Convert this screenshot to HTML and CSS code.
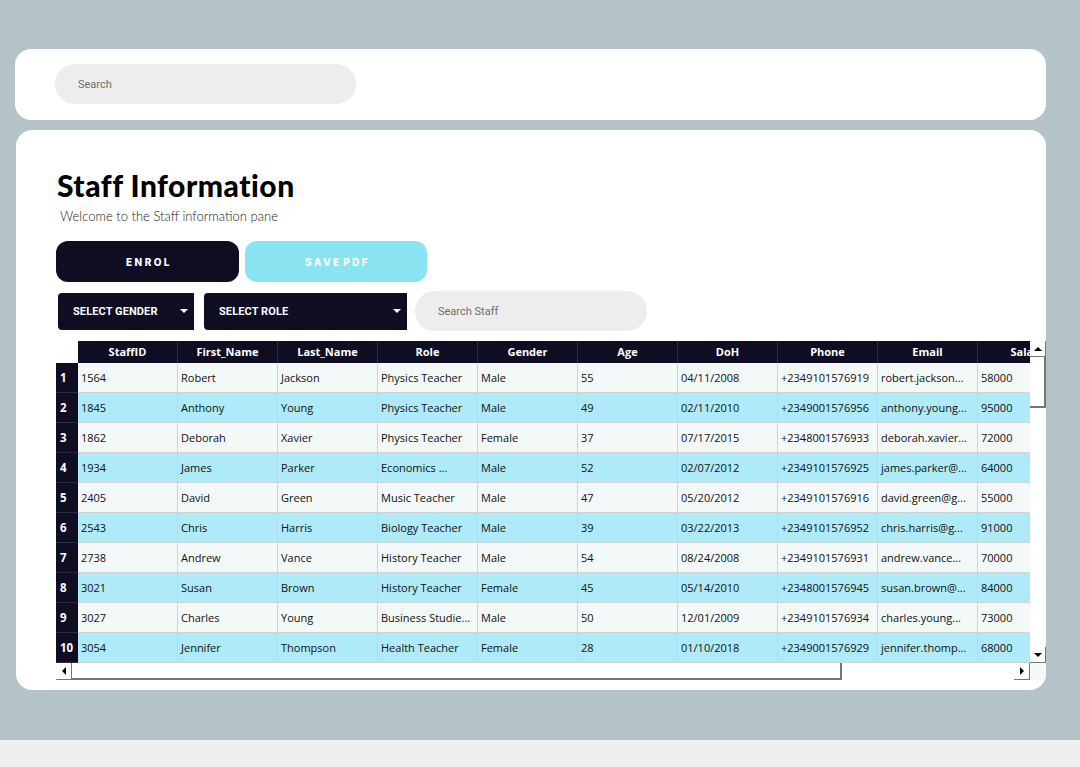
FILE: index.html
```html
<!DOCTYPE html>
<html>
<head>
<meta charset="utf-8">
<link rel="stylesheet" href="styles.css">
</head>
<body>
<div class="page">
  <header class="topbar">
    <div class="pill search-top">Search</div>
  </header>
  <main class="panel">
    <h1 class="title">Staff Information</h1>
    <p class="subtitle">Welcome to the Staff information pane</p>
    <div class="actions">
      <button class="btn btn-dark">ENROL</button>
      <button class="btn btn-light">SAVE PDF</button>
    </div>
    <div class="filters">
      <div class="select sel-gender"><span>SELECT GENDER</span><i class="caret"></i></div>
      <div class="select sel-role"><span>SELECT ROLE</span><i class="caret"></i></div>
      <div class="pill search-staff">Search Staff</div>
    </div>
    <div class="grid-wrap">
      <div class="viewport">
        <table class="data">
          <colgroup><col class="c-rh"><col><col><col><col><col><col><col><col><col><col></colgroup>
          <thead>
            <tr><th class="corner-cell"></th><th>StaffID</th><th>First_Name</th><th>Last_Name</th><th>Role</th><th>Gender</th><th>Age</th><th>DoH</th><th>Phone</th><th>Email</th><th>Salary</th></tr>
          </thead>
          <tbody>
            <tr class="odd"><th>1</th><td>1564</td><td>Robert</td><td>Jackson</td><td>Physics Teacher</td><td>Male</td><td>55</td><td>04/11/2008</td><td>+2349101576919</td><td>robert.jackson...</td><td>58000</td></tr>
            <tr class="even"><th>2</th><td>1845</td><td>Anthony</td><td>Young</td><td>Physics Teacher</td><td>Male</td><td>49</td><td>02/11/2010</td><td>+2349001576956</td><td>anthony.young...</td><td>95000</td></tr>
            <tr class="odd"><th>3</th><td>1862</td><td>Deborah</td><td>Xavier</td><td>Physics Teacher</td><td>Female</td><td>37</td><td>07/17/2015</td><td>+2348001576933</td><td>deborah.xavier...</td><td>72000</td></tr>
            <tr class="even"><th>4</th><td>1934</td><td>James</td><td>Parker</td><td>Economics ...</td><td>Male</td><td>52</td><td>02/07/2012</td><td>+2349101576925</td><td>james.parker@...</td><td>64000</td></tr>
            <tr class="odd"><th>5</th><td>2405</td><td>David</td><td>Green</td><td>Music Teacher</td><td>Male</td><td>47</td><td>05/20/2012</td><td>+2349101576916</td><td>david.green@g...</td><td>55000</td></tr>
            <tr class="even"><th>6</th><td>2543</td><td>Chris</td><td>Harris</td><td>Biology Teacher</td><td>Male</td><td>39</td><td>03/22/2013</td><td>+2349101576952</td><td>chris.harris@g...</td><td>91000</td></tr>
            <tr class="odd"><th>7</th><td>2738</td><td>Andrew</td><td>Vance</td><td>History Teacher</td><td>Male</td><td>54</td><td>08/24/2008</td><td>+2349101576931</td><td>andrew.vance...</td><td>70000</td></tr>
            <tr class="even"><th>8</th><td>3021</td><td>Susan</td><td>Brown</td><td>History Teacher</td><td>Female</td><td>45</td><td>05/14/2010</td><td>+2348001576945</td><td>susan.brown@...</td><td>84000</td></tr>
            <tr class="odd"><th>9</th><td>3027</td><td>Charles</td><td>Young</td><td>Business Studie...</td><td>Male</td><td>50</td><td>12/01/2009</td><td>+2349101576934</td><td>charles.young...</td><td>73000</td></tr>
            <tr class="even"><th>10</th><td>3054</td><td>Jennifer</td><td>Thompson</td><td>Health Teacher</td><td>Female</td><td>28</td><td>01/10/2018</td><td>+2349001576929</td><td>jennifer.thomp...</td><td>68000</td></tr>
          </tbody>
        </table>
      </div>
      <div class="vscroll">
        <div class="sbtn"><i class="tri tri-up"></i></div>
        <div class="vthumb"></div>
        <div class="vtrack"></div>
        <div class="sbtn"><i class="tri tri-down"></i></div>
      </div>
      <div class="hscroll">
        <div class="sbtn"><i class="tri tri-left"></i></div>
        <div class="hthumb"></div>
        <div class="htrack"></div>
        <div class="sbtn"><i class="tri tri-right"></i></div>
      </div>
      <div class="scorner"></div>
    </div>
  </main>
</div>
<footer class="bottom"></footer>
</body>
</html>
```

FILE: styles.css
```css
* { box-sizing: border-box; }
html, body { margin: 0; padding: 0; }
body { background: #efefef; font-family: "Open Sans", "Noto Sans", sans-serif; }

.page {
  background: #b3c3c7;
  height: 740px;
  padding: 49px 0 0 15px;
}

.topbar {
  width: 1031px;
  height: 71px;
  background: #fff;
  border-radius: 16px;
  padding: 15px 40px;
}

.pill {
  background: #ededed;
  border-radius: 20px;
  height: 40px;
  display: flex;
  align-items: center;
  padding-left: 23px;
  font-family: Roboto, "Noto Sans", sans-serif;
  font-size: 11px;
  color: #6e6e6e;
}
.search-top { width: 301px; }

.panel {
  margin-top: 10px;
  margin-left: 1px;
  width: 1030px;
  height: 560px;
  background: #fff;
  border-radius: 16px;
  padding: 38px 0 0 40px;
  overflow: hidden;
}

.title {
  margin: 0;
  font-family: Lato, "Noto Sans", sans-serif;
  font-weight: 900;
  font-size: 30px;
  letter-spacing: 0.5px;
  line-height: 34px;
  color: #000;
  padding-left: 1px;
}
.subtitle {
  margin: 6px 0 0 4px;
  font-family: Lato, "Noto Sans", sans-serif;
  font-weight: 300;
  font-size: 13px;
  line-height: 16px;
  color: #222;
}

.actions { display: flex; gap: 6px; margin-top: 17px; }
.btn {
  width: 183px;
  height: 41px;
  border: 0;
  border-radius: 12px;
  color: #fff;
  font-family: Inter, "Noto Sans", sans-serif;
  font-weight: 800;
  font-size: 10px;
  letter-spacing: 2.4px;
  padding: 0 0 0 3px;
}
.btn-dark { background: #0e0d22; }
.btn-light { background: #89e3f1; width: 182px; word-spacing: -3px; }

.filters {
  display: flex;
  align-items: center;
  margin-top: 9px;
  height: 40px;
  padding-left: 2px;
}
.select {
  height: 37px;
  background: #0e0d22;
  color: #fff;
  border-radius: 4px 0 0 4px;
  display: flex;
  align-items: center;
  justify-content: space-between;
  padding: 0 6px 0 15px;
  font-family: Roboto, "Noto Sans", sans-serif;
  font-weight: 700;
  font-size: 11px;
  letter-spacing: 0.1px;
}
.sel-gender { width: 136px; margin-right: 10px; }
.sel-role { width: 203px; margin-right: 8px; }
.caret {
  width: 0; height: 0;
  border-left: 4px solid transparent;
  border-right: 4px solid transparent;
  border-top: 4px solid #fff;
}
.search-staff { width: 232px; }

.grid-wrap {
  margin-top: 10px;
  display: grid;
  grid-template-columns: 974px 16px;
  grid-template-rows: 322px 17px;
}
.viewport { overflow: hidden; background: #fff; }

.data {
  border-collapse: separate;
  border-spacing: 0;
  table-layout: fixed;
  width: 1022px;
  font-size: 11px;
  color: #111;
}
.data col { width: 100px; }
.data col.c-rh { width: 22px; }
.data thead tr { height: 22px; }
.data thead th {
  background: #0e0d22;
  color: #fff;
  font-weight: 700;
  font-size: 11px;
  text-align: center;
  border-right: 1px solid #2e2d44;
  padding: 0 0 1px;
  white-space: nowrap;
  overflow: hidden;
}
.data thead th.corner-cell { background: #fff; border-right: 0; }
.data tbody tr { height: 30px; }
.data tbody th {
  background: #0e0d22;
  color: #fff;
  font-weight: 700;
  font-size: 11.5px;
  text-align: left;
  padding: 0 0 0 4px;
  border-bottom: 1px solid #2a2940;
}
.data td {
  padding: 0 0 0 3px;
  border-right: 1px solid #d2d2d2;
  border-bottom: 1px solid #d2d2d2;
  white-space: nowrap;
  overflow: hidden;
}
.odd td { background: #f3f8f8; }
.even td { background: #aeeaf7; }

.vscroll {
  display: flex;
  flex-direction: column;
  background: #f3f8f8;
}
.sbtn {
  width: 16px;
  height: 16px;
  background: #fff;
  border-right: 1px solid #777;
  border-bottom: 1px solid #777;
  display: flex;
  align-items: center;
  justify-content: center;
  flex: none;
}
.vthumb {
  height: 51px;
  background: #fff;
  border-right: 2px solid #777;
  border-bottom: 2px solid #777;
  flex: none;
}
.vtrack { flex: 1; background: #fff; }

.hscroll {
  display: flex;
  background: #fff;
}
.hscroll .sbtn { height: 17px; }
.hthumb {
  width: 770px;
  height: 17px;
  background: #fff;
  border-right: 2px solid #777;
  border-bottom: 2px solid #777;
  flex: none;
}
.htrack { flex: 1; }
.scorner { background: #f3f8f8; }

.tri { width: 0; height: 0; display: block; }
.tri-up { border-left: 4px solid transparent; border-right: 4px solid transparent; border-bottom: 4px solid #000; }
.tri-down { border-left: 4px solid transparent; border-right: 4px solid transparent; border-top: 4px solid #000; }
.tri-left { border-top: 4px solid transparent; border-bottom: 4px solid transparent; border-right: 4px solid #000; }
.tri-right { border-top: 4px solid transparent; border-bottom: 4px solid transparent; border-left: 4px solid #000; }

.bottom { height: 27px; background: #efefef; }
```
